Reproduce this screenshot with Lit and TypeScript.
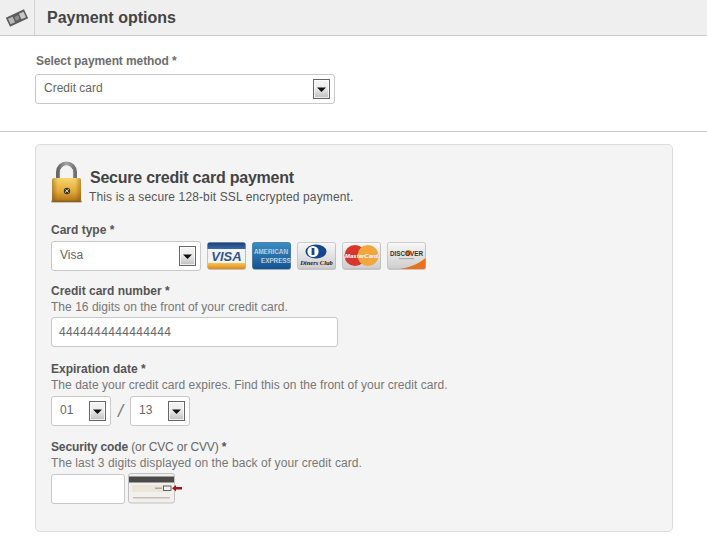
import { LitElement, html, css, svg } from "lit";
import { customElement } from "lit/decorators.js";

const arrow = html`<span class="arrow"><svg width="17" height="20" viewBox="0 0 17 20"><defs><linearGradient id="ag" x1="0" y1="0" x2="0" y2="1"><stop offset="0" stop-color="#f6f6f6"/><stop offset=".45" stop-color="#ececec"/><stop offset="1" stop-color="#bdbdbd"/></linearGradient></defs><rect x="0.5" y="0.5" width="16" height="19" fill="url(#ag)" stroke="#666"/><rect x="1.5" y="1.5" width="14" height="17" fill="none" stroke="#fff" stroke-opacity=".7"/><path d="M4 8.500h9l-4.500 4.500z" fill="#111"/></svg></span>`;

const sel = (text: string, cls: string) => html`<div class="select ${cls}"><span>${text}</span>${arrow}</div>`;

const grads = svg`<defs>
  <linearGradient id="gr" x1="0" y1="0" x2="0" y2="1"><stop offset="0" stop-color="#f8f8f8"/><stop offset="1" stop-color="#cdcdcd"/></linearGradient>
  <linearGradient id="gv" x1="0" y1="0" x2="0" y2="1"><stop offset="0" stop-color="#1f3f78"/><stop offset="1" stop-color="#3a68a8"/></linearGradient>
  <linearGradient id="go" x1="0" y1="0" x2="0" y2="1"><stop offset="0" stop-color="#f6c850"/><stop offset="1" stop-color="#e2861a"/></linearGradient>
  <linearGradient id="am" x1="0" y1="0" x2="0" y2="1"><stop offset="0" stop-color="#3a8cc4"/><stop offset="1" stop-color="#175290"/></linearGradient>
</defs>`;
const shadow = svg`<rect x="1" y="2" width="38" height="26" rx="2" fill="#000" opacity=".14"/>`;
const visa = svg`${shadow}<rect x=".5" y=".5" width="38" height="26.500" rx="2" fill="#f3f3f3" stroke="#8794aa" stroke-width=".5"/><path d="M.5 7V2.500a2 2 0 0 1 2-2h34a2 2 0 0 1 2 2V7z" fill="url(#gv)"/><path d="M.5 21v4a2 2 0 0 0 2 2h34a2 2 0 0 0 2-2v-4z" fill="url(#go)"/><text x="19.500" y="19" text-anchor="middle" class="vt">VISA</text>`;
const amex = svg`${shadow}<rect x=".5" y=".5" width="38" height="26.500" rx="2" fill="url(#am)" stroke="#1f5a8e" stroke-width=".6"/><text x="2" y="12" class="at">AMERICAN</text><text x="9" y="20.500" class="at">EXPRESS</text>`;
const diners = svg`${shadow}<rect x=".5" y=".5" width="38" height="26.500" rx="2" fill="url(#gr)" stroke="#b0b0b0" stroke-width=".6"/><ellipse cx="19" cy="9.500" rx="10.500" ry="7" fill="#16468c"/><circle cx="16" cy="9.500" r="5.600" fill="#fff"/><rect x="14.600" y="6" width="2.800" height="7" fill="#16468c"/><text x="19.500" y="23" text-anchor="middle" class="dt">Diners Club</text>`;
const master = svg`${shadow}<rect x=".5" y=".5" width="38" height="26.500" rx="2" fill="url(#gr)" stroke="#b0b0b0" stroke-width=".6"/><circle cx="13" cy="13.500" r="10.500" fill="#d8352c"/><circle cx="26" cy="13.500" r="10.500" fill="#f2a63e"/><text x="19.500" y="16" text-anchor="middle" class="mt">MasterCard</text>`;
const discover = svg`${shadow}<rect x=".5" y=".5" width="38" height="26.500" rx="2" fill="url(#gr)" stroke="#b0b0b0" stroke-width=".6"/><path d="M13 27 C24 25 33 21 38.500 16 V25 a2 2 0 0 1-2 2z" fill="#e8711c"/><circle cx="21.300" cy="11" r="3" fill="#ee7a20"/><text x="19.500" y="13.500" text-anchor="middle" class="xt">DISCOVER</text><rect x="12" y="16" width="15" height="1.200" fill="#aaa"/>`;

@customElement("app-root")
export class AppRoot extends LitElement {
  static styles = css`
    :host { display: block; width: 707px; height: 548px; background: #fff; overflow: hidden; font-family: "Liberation Sans", Arial, sans-serif; font-size: 12px; color: #666; }
    .head { display: flex; align-items: stretch; height: 35px; background: #efefef; border-bottom: 1px solid #c9c9c9; }
    .hicon { width: 34px; border-right: 1px solid #d4d4d4; display: flex; align-items: center; justify-content: center; }
    h1 { margin: 0 0 0 12px; font-size: 16px; line-height: 35px; font-weight: bold; color: #444; }
    .method { padding: 17px 0 27px 35px; border-bottom: 1px solid #ccc; }
    .toplabel { font-weight: bold; color: #6e6e6e; line-height: 16px; margin-bottom: 5px; padding-left: 1px; letter-spacing: -0.09px; }
    .select { box-sizing: border-box; display: flex; justify-content: space-between; background: #fff; border: 1px solid #c8c8c8; border-radius: 3px; height: 30px; padding: 0 4px 0 8px; line-height: 26px; color: #666; }
    .arrow { display: block; padding-top: 4px; height: 20px; }
    .arrow svg { display: block; }
    .w300 { width: 300px; }
    .w150 { width: 150px; }
    .w60 { width: 60px; }
    .panel { box-sizing: border-box; margin: 12px 0 0 35px; width: 638px; height: 388px; background: #f4f4f4; border: 1px solid #dcdcdc; border-radius: 5px; padding: 15px 15px; }
    .sec { display: flex; gap: 8px; height: 44px; margin-bottom: 18px; }
    .sec h2 { margin: 8px 0 0; font-size: 16px; line-height: 20px; font-weight: bold; color: #444; letter-spacing: -0.23px; }
    .sec p { margin: 1px 0 0 -1px; line-height: 16px; color: #555; letter-spacing: 0.13px; }
    .field { margin-bottom: 14px; }
    .f12 { margin-bottom: 12px; }
    .f13 { margin-bottom: 13px; }
    label { display: block; font-weight: bold; color: #555; line-height: 16px; }
    label span { font-weight: normal; color: #666; }
    .tight { letter-spacing: -0.13px; }
    .hint { line-height: 16px; color: #777; letter-spacing: 0.03px; }
    .hint8 { letter-spacing: 0.08px; }
    .row { display: flex; align-items: center; margin-top: 3px; }
    .cards { gap: 5px; }
    .cards .select { margin-right: 1px; }
    .card { display: block; }
    .input { box-sizing: border-box; background: #fff; border: 1px solid #c8c8c8; border-radius: 3px; height: 30px; padding: 0 7px; line-height: 28px; color: #666; letter-spacing: 0.35px; }
    .num { width: 287px; margin-top: 2px; }
    .slash { width: 19px; text-align: center; font-size: 18px; color: #777; font-style: italic; }
    .code { width: 74px; margin-top: 1px; }
    .rowcode { gap: 3px; align-items: flex-start; margin-top: 2px; }
    .vt { font: italic bold 13px "Liberation Sans", sans-serif; fill: #33558f; }
    .at { font: bold 6.300px "Liberation Sans", sans-serif; fill: #e4eef6; stroke: #1d5a8e; stroke-width: .15px; }
    .dt { font: italic bold 6.500px "Liberation Serif", serif; fill: #222; }
    .mt { font: italic bold 6px "Liberation Sans", sans-serif; fill: #fff; }
    .xt { font: bold 6.300px "Liberation Sans", sans-serif; fill: #333; }
  `;

  render() {
    const card = (c: unknown) => html`<svg class="card" width="40" height="28" viewBox="0 0 40 28">${grads}${c}</svg>`;
    return html`
      <div class="head">
        <div class="hicon"><svg width="24" height="18" viewBox="0 0 24 18"><g transform="rotate(-25 12 9)"><rect x="2" y="4" width="20" height="10" fill="#5c5c5c"/><rect x="3.500" y="6" width="5" height="6" fill="#b8b8b8"/><rect x="15.500" y="6" width="5" height="6" fill="#c8c8c8"/><circle cx="12" cy="9" r="2.300" fill="#8c8c8c"/></g></svg></div>
        <h1>Payment options</h1>
      </div>
      <div class="method">
        <div class="toplabel">Select payment method *</div>
        ${sel("Credit card", "w300")}
      </div>
      <div class="panel">
        <div class="sec">
          <svg width="31" height="44" viewBox="0 0 31 44">
            <defs>
              <linearGradient id="lk" x1="0" y1="0" x2="0" y2="1"><stop offset="0" stop-color="#f7d46c"/><stop offset=".55" stop-color="#e5aa38"/><stop offset="1" stop-color="#ab6c12"/></linearGradient>
              <linearGradient id="ed" x1="0" y1="0" x2="1" y2="0"><stop offset="0" stop-color="#7a4a08" stop-opacity=".45"/><stop offset=".2" stop-color="#7a4a08" stop-opacity="0"/><stop offset=".8" stop-color="#7a4a08" stop-opacity="0"/><stop offset="1" stop-color="#7a4a08" stop-opacity=".45"/></linearGradient>
              <linearGradient id="sh" x1="0" y1="0" x2="1" y2="0"><stop offset="0" stop-color="#666"/><stop offset=".5" stop-color="#a6a6a6"/><stop offset="1" stop-color="#707070"/></linearGradient>
            </defs>
            <path d="M7 20V12a8.500 8.500 0 0 1 17 0v8" fill="none" stroke="url(#sh)" stroke-width="4"/>
            <path d="M9.300 19V12a6.200 6.200 0 0 1 12.400 0v7" fill="none" stroke="#ececec" stroke-width="1"/>
            <rect x="1" y="18" width="29" height="24" rx="2" fill="url(#lk)"/>
            <rect x="1" y="18" width="29" height="24" rx="2" fill="url(#ed)"/>
            <rect x="0" y="40.500" width="31" height="2" rx="1" fill="#7c5a28" opacity=".65"/>
            <circle cx="16" cy="31" r="3.200" fill="#3c3524"/><path d="M14 32.500l3.800-3.300M14.500 29.500l3 3" stroke="#eee8d4" stroke-width=".9"/>
          </svg>
          <div><h2>Secure credit card payment</h2><p>This is a secure 128-bit SSL encrypted payment.</p></div>
        </div>
        <div class="field f12">
          <label>Card type *</label>
          <div class="row cards">
            ${sel("Visa", "w150")}
            ${card(visa)}${card(amex)}${card(diners)}${card(master)}${card(discover)}
          </div>
        </div>
        <div class="field">
          <label>Credit card number *</label>
          <div class="hint">The 16 digits on the front of your credit card.</div>
          <div class="input num">4444444444444444</div>
        </div>
        <div class="field f13">
          <label>Expiration date *</label>
          <div class="hint">The date your credit card expires. Find this on the front of your credit card.</div>
          <div class="row">${sel("01", "w60")}<span class="slash">/</span>${sel("13", "w60")}</div>
        </div>
        <div class="field">
          <label class="tight">Security code <span>(or CVC or CVV)</span> *</label>
          <div class="hint hint8">The last 3 digits displayed on the back of your credit card.</div>
          <div class="row rowcode">
            <div class="input code"></div>
            <svg width="56" height="31" viewBox="0 0 56 31">
              <rect x=".5" y=".5" width="46" height="29.500" rx="2.500" fill="#f1f0ed" stroke="#c0c0c0"/>
              <rect x="1" y="3.500" width="45" height="6" fill="#4a4a4a"/>
              <rect x="4" y="12" width="38" height="7" fill="#ebe5da"/>
              <rect x="27" y="14.600" width="7" height="1.200" fill="#999"/>
              <rect x="35.500" y="13" width="7.500" height="4.500" fill="#efefef" stroke="#444" stroke-width=".8"/>
              <path d="M44 15.200l4-3.200v2h6v2.500h-6v2z" fill="#a81414"/>
              <rect x="5" y="24" width="37" height="1.600" fill="#c4c2bc"/>
            </svg>
          </div>
        </div>
      </div>
    `;
  }
}
